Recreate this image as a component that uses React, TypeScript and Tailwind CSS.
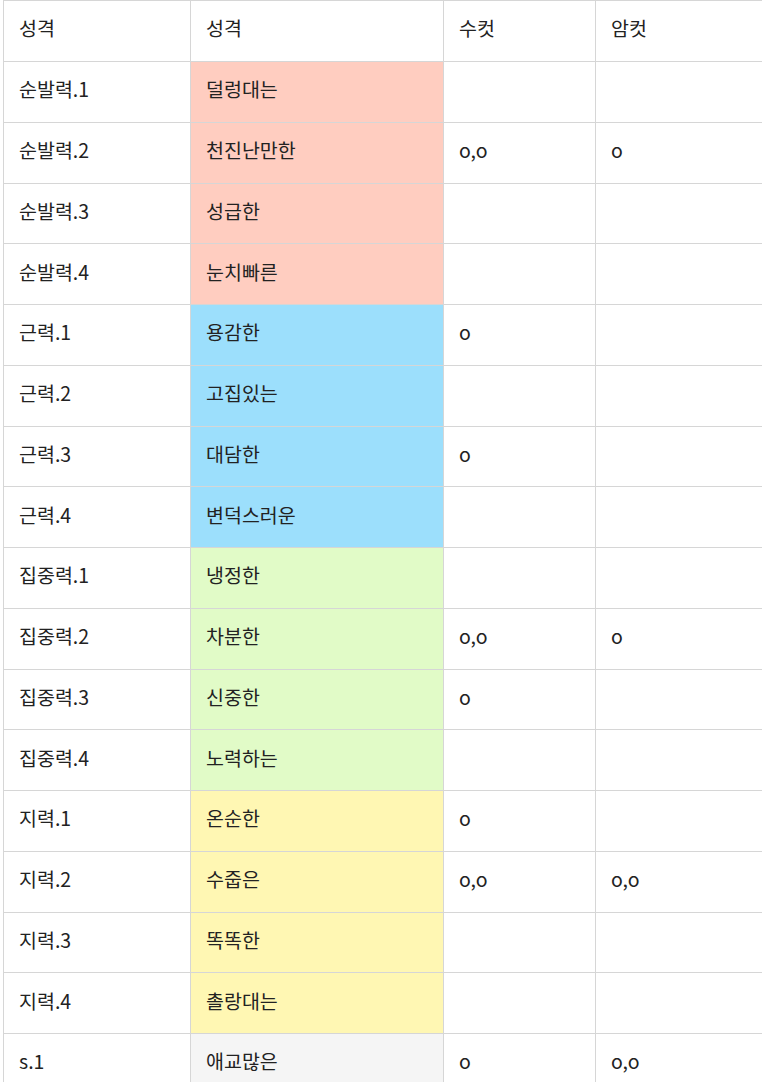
import React from 'react';

type Row = { stat: string; trait: string; male: string; female: string; tone: string };

const tone: Record<string, string> = {
  pink: 'bg-[#ffcdc0]',
  blue: 'bg-[#9cdffc]',
  green: 'bg-[#e1fbc7]',
  yellow: 'bg-[#fff7b3]',
  gray: 'bg-[#f5f5f5]',
};

const rows: Row[] = [
  { stat: '순발력.1', trait: '덜렁대는', male: '', female: '', tone: 'pink' },
  { stat: '순발력.2', trait: '천진난만한', male: 'o,o', female: 'o', tone: 'pink' },
  { stat: '순발력.3', trait: '성급한', male: '', female: '', tone: 'pink' },
  { stat: '순발력.4', trait: '눈치빠른', male: '', female: '', tone: 'pink' },
  { stat: '근력.1', trait: '용감한', male: 'o', female: '', tone: 'blue' },
  { stat: '근력.2', trait: '고집있는', male: '', female: '', tone: 'blue' },
  { stat: '근력.3', trait: '대담한', male: 'o', female: '', tone: 'blue' },
  { stat: '근력.4', trait: '변덕스러운', male: '', female: '', tone: 'blue' },
  { stat: '집중력.1', trait: '냉정한', male: '', female: '', tone: 'green' },
  { stat: '집중력.2', trait: '차분한', male: 'o,o', female: 'o', tone: 'green' },
  { stat: '집중력.3', trait: '신중한', male: 'o', female: '', tone: 'green' },
  { stat: '집중력.4', trait: '노력하는', male: '', female: '', tone: 'green' },
  { stat: '지력.1', trait: '온순한', male: 'o', female: '', tone: 'yellow' },
  { stat: '지력.2', trait: '수줍은', male: 'o,o', female: 'o,o', tone: 'yellow' },
  { stat: '지력.3', trait: '똑똑한', male: '', female: '', tone: 'yellow' },
  { stat: '지력.4', trait: '촐랑대는', male: '', female: '', tone: 'yellow' },
  { stat: 's.1', trait: '애교많은', male: 'o', female: 'o,o', tone: 'gray' },
];

const cell = 'border border-[#d6d6d6] px-[15px] text-left align-middle font-normal pb-[6px] whitespace-nowrap';

export default function App() {
  return (
    <div
      className="w-[762px] h-[1082px] overflow-hidden bg-white pl-[3px] text-[19.5px] text-[#222]"
      style={{ fontFamily: '"Noto Sans CJK KR", "Noto Sans", sans-serif' }}
    >
      <table className="border-collapse table-fixed w-[900px]">
        <colgroup>
          <col className="w-[187px]" />
          <col className="w-[253px]" />
          <col className="w-[152px]" />
          <col className="w-[308px]" />
        </colgroup>
        <thead>
          <tr className="h-[61px]">
            <th className={cell}>성격</th>
            <th className={cell}>성격</th>
            <th className={cell}>수컷</th>
            <th className={cell}>암컷</th>
          </tr>
        </thead>
        <tbody>
          {rows.map(r => (
            <tr key={r.stat} className="h-[60.75px]">
              <td className={cell}>{r.stat}</td>
              <td className={`${cell} ${tone[r.tone]}`}>{r.trait}</td>
              <td className={cell}>{r.male}</td>
              <td className={cell}>{r.female}</td>
            </tr>
          ))}
        </tbody>
      </table>
    </div>
  );
}
